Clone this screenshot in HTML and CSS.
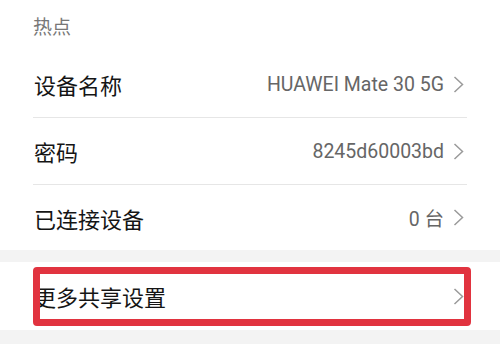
FILE: index.html
```html
<!DOCTYPE html>
<html lang="zh">
<head>
<meta charset="utf-8">
<link rel="stylesheet" href="styles.css">
</head>
<body>
<div class="page">
  <section class="card">
    <div class="header">热点</div>
    <div class="row divided">
      <span class="label">设备名称</span>
      <span class="value">HUAWEI Mate 30 5G</span>
      <svg class="chev" width="11" height="17" viewBox="0 0 11 17"><polyline points="1.5,1 9.5,8.5 1.5,16" fill="none" stroke="#9a9a9a" stroke-width="1.5"/></svg>
    </div>
    <div class="row divided">
      <span class="label">密码</span>
      <span class="value">8245d60003bd</span>
      <svg class="chev" width="11" height="17" viewBox="0 0 11 17"><polyline points="1.5,1 9.5,8.5 1.5,16" fill="none" stroke="#9a9a9a" stroke-width="1.5"/></svg>
    </div>
    <div class="row">
      <span class="label">已连接设备</span>
      <span class="value">0 台</span>
      <svg class="chev" width="11" height="17" viewBox="0 0 11 17"><polyline points="1.5,1 9.5,8.5 1.5,16" fill="none" stroke="#9a9a9a" stroke-width="1.5"/></svg>
    </div>
  </section>
  <section class="card card-more">
    <div class="row row-more">
      <span class="label">更多共享设置</span>
      <span class="value"></span>
      <svg class="chev" width="11" height="17" viewBox="0 0 11 17"><polyline points="1.5,1 9.5,8.5 1.5,16" fill="none" stroke="#9a9a9a" stroke-width="1.5"/></svg>
    </div>
    <div class="highlight"></div>
  </section>
</div>
</body>
</html>
```
FILE: styles.css
```css
* { box-sizing: border-box; }
html, body {
  margin: 0;
  padding: 0;
  background: #f3f3f3;
  font-family: Roboto, "Noto Sans CJK SC", sans-serif;
}
.page {
  width: 500px;
  height: 344px;
  overflow: hidden;
  display: flex;
  flex-direction: column;
  gap: 12px;
}
.card {
  background: #ffffff;
  display: flex;
  flex-direction: column;
}
.header {
  height: 51px;
  padding-left: 33px;
  display: flex;
  align-items: center;
  font-size: 19px;
  color: #777777;
}
.row {
  height: 65px;
  margin: 0 33px;
  padding: 0 3px 0 1px;
  display: flex;
  align-items: center;
}
.divided {
  height: 67px;
  border-bottom: 1px solid #e6e6e6;
}
.label {
  font-size: 22px;
  color: #151515;
  flex: 1;
}
.value {
  font-size: 19.5px;
  color: #666666;
  margin-right: 9px;
}
.chev {
  display: block;
  flex: none;
}
.card-more {
  position: relative;
  height: 68px;
}
.row-more {
  height: 68px;
}
.highlight {
  position: absolute;
  left: 33px;
  top: 5px;
  width: 438px;
  height: 59px;
  border: 7px solid #e1333f;
  border-radius: 4px;
}
```
